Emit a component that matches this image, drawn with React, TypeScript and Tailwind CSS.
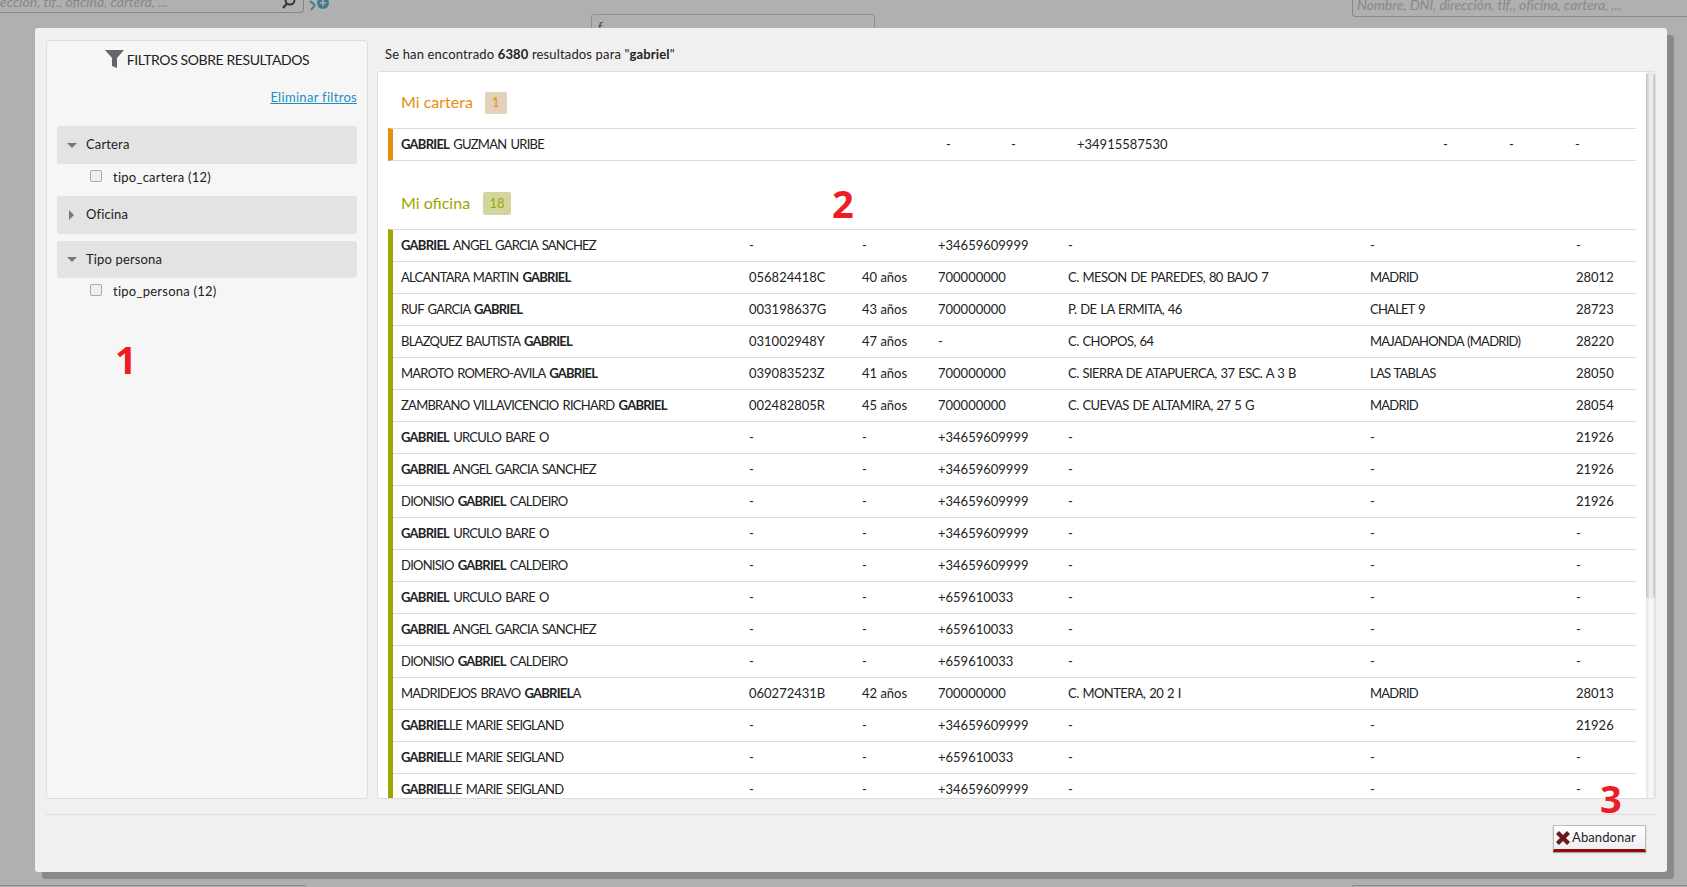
type Row = { name: [string, string, string]; dni: string; age: string; tel: string; addr: string; city: string; cp: string };

const mk = (a: string, b: string, c: string, tel: string, cp = "-", dni = "-", age = "-", addr = "-", city = "-"): Row => ({
  name: [a, b, c], dni, age, tel, addr, city, cp,
});

const G = "GABRIEL";
const rows: Row[] = [
  mk("", G, " ANGEL GARCIA SANCHEZ", "+34659609999"),
  mk("ALCANTARA MARTIN ", G, "", "700000000", "28012", "056824418C", "40 años", "C. MESON DE PAREDES, 80 BAJO 7", "MADRID"),
  mk("RUF GARCIA ", G, "", "700000000", "28723", "003198637G", "43 años", "P. DE LA ERMITA, 46", "CHALET 9"),
  mk("BLAZQUEZ BAUTISTA ", G, "", "-", "28220", "031002948Y", "47 años", "C. CHOPOS, 64", "MAJADAHONDA (MADRID)"),
  mk("MAROTO ROMERO-AVILA ", G, "", "700000000", "28050", "039083523Z", "41 años", "C. SIERRA DE ATAPUERCA, 37 ESC. A 3 B", "LAS TABLAS"),
  mk("ZAMBRANO VILLAVICENCIO RICHARD ", G, "", "700000000", "28054", "002482805R", "45 años", "C. CUEVAS DE ALTAMIRA, 27 5 G", "MADRID"),
  mk("", G, " URCULO BARE O", "+34659609999", "21926"),
  mk("", G, " ANGEL GARCIA SANCHEZ", "+34659609999", "21926"),
  mk("DIONISIO ", G, " CALDEIRO", "+34659609999", "21926"),
  mk("", G, " URCULO BARE O", "+34659609999"),
  mk("DIONISIO ", G, " CALDEIRO", "+34659609999"),
  mk("", G, " URCULO BARE O", "+659610033"),
  mk("", G, " ANGEL GARCIA SANCHEZ", "+659610033"),
  mk("DIONISIO ", G, " CALDEIRO", "+659610033"),
  mk("MADRIDEJOS BRAVO ", "GABRIEL", "A", "700000000", "28013", "060272431B", "42 años", "C. MONTERA, 20 2 I", "MADRID"),
  mk("", "GABRIEL", "LE MARIE SEIGLAND", "+34659609999", "21926"),
  mk("", "GABRIEL", "LE MARIE SEIGLAND", "+659610033"),
  mk("", "GABRIEL", "LE MARIE SEIGLAND", "+34659609999"),
];

const Caret = ({ open }: { open: boolean }) =>
  open ? (
    <span className="w-0 h-0 border-x-[5px] border-x-transparent border-t-[5px] border-t-[#777]" />
  ) : (
    <span className="w-0 h-0 ml-[2px] border-y-[5px] border-y-transparent border-l-[5px] border-l-[#777]" />
  );

const FilterGroup = ({ title, open, option, tall }: { title: string; open: boolean; option?: string; tall?: boolean }) => (
  <div>
    <div className={`${tall ? "h-[38px]" : "h-[37px]"} bg-[#e3e3e3] rounded-[3px] flex items-center pl-[10px]`}>
      <span className="w-[19px] flex items-center"><Caret open={open} /></span>
      <span className="tracking-[0.15px]">{title}</span>
    </div>
    {option && (
      <div className="h-[32px] pb-[4px] flex items-center pl-[33px]">
        <span className="w-[12px] h-[12px] -mt-[5px] mr-[11px] border border-[#aaa] rounded-[2px] bg-[#f0f0f0]" />
        <span className="tracking-[0.25px]">{option}</span>
      </div>
    )}
  </div>
);

const App = () => {
  return (
    <div className="relative w-[1687px] h-[887px] overflow-hidden bg-[#b0b0b0] font-['Lato',sans-serif] text-[13px] text-[#222]">
      {/* page behind the overlay */}
      <div className="flex items-start h-[24px]">
        <div className="w-[304px] h-[14px] -mt-[1px] border-b border-r border-[#888] rounded-br-[4px] flex items-center justify-between pr-[6px] overflow-hidden">
          <span className="italic text-[14px] text-[#888] -mt-[8px] whitespace-nowrap">ección, tlf., oficina, cartera, ...</span>
          <svg width="16" height="14" viewBox="0 0 16 14" className="-mt-[3px]" fill="none" stroke="#333" strokeWidth="2">
            <circle cx="9" cy="3" r="4.5" /><path d="M5.5 7 L2 11" />
          </svg>
        </div>
        <svg width="22" height="12" viewBox="0 0 22 12" className="ml-[5px]">
          <path d="M1 1 L6 5 M6 5 L2 10" stroke="#3d7f8c" strokeWidth="2" fill="none" />
          <circle cx="14" cy="3" r="6" fill="#3d7f8c" />
          <path d="M14 0 V6 M11 3 H17" stroke="#b0b0b0" strokeWidth="1.5" />
        </svg>
        <div className="ml-[260px] mt-[14px] w-[284px] h-[20px] border border-[#909090] rounded-t-[3px] pl-[6px] leading-[24px] italic text-[#444]">ƒ</div>
        <div className="ml-auto w-[335px] h-[17px] border-l border-b border-[#888] rounded-bl-[4px] pl-[4px] overflow-hidden">
          <span className="italic text-[14px] text-[#888] block -mt-[6px] tracking-[-0.05px] whitespace-nowrap">Nombre, DNI, dirección, tlf., oficina, cartera, ...</span>
        </div>
      </div>

      {/* modal */}
      <div className="absolute left-[35px] top-[28px] w-[1632px] h-[844px] bg-[#f0f0f0] rounded-[3px] shadow-[7px_7px_1px_rgba(0,0,0,0.22)] px-[11px] pt-[12px] flex flex-col">
        <div className="flex gap-[9px] h-[759px]">
          {/* filtros */}
          <div className="w-[322px] bg-[#f6f6f6] border border-[#dedede] rounded-[3px] px-[10px]">
            <div className="h-[36px] flex items-center justify-center gap-[3px] text-[14px] tracking-[-0.4px]">
              <svg width="19" height="18" viewBox="0 0 19 18" fill="#666"><path d="M0 0 H19 L12 8 V18 L7 16 V8 Z" /></svg>
              <span>FILTROS SOBRE RESULTADOS</span>
            </div>
            <div className="text-right mt-[11px] h-[18px] mb-[20px] tracking-[0.3px]">
              <a className="text-[#1b8fc1] underline">Eliminar filtros</a>
            </div>
            <div className="flex flex-col">
              <FilterGroup title="Cartera" open tall option="tipo_cartera (12)" />
              <FilterGroup title="Oficina" open={false} tall />
              <div className="h-[7px]" />
              <FilterGroup title="Tipo persona" open option="tipo_persona (12)" />
            </div>
          </div>

          {/* resultados */}
          <div className="flex-1 flex flex-col">
            <div className="h-[31px] flex items-start pt-[5px] pl-[8px] tracking-[0.15px]">
              <span>Se han encontrado <b>6380</b> resultados para "<b>gabriel</b>"</span>
            </div>
            <div className="relative flex-1 bg-white border border-[#dedede] rounded-[3px] pl-[10px] pr-[19px] overflow-hidden">
              <div className="h-[56px] flex items-center pl-[13px] gap-[12px] text-[#e78d0e] pt-[3px]">
                <span className="text-[16px]">Mi cartera</span>
                <span className="w-[22px] h-[22px] mt-[2px] bg-[#e2d2bc] rounded-[2px] flex items-center justify-center text-[13px]">1</span>
              </div>
              <div className="h-[33px] border-y border-[#ddd] border-l-[5px] border-l-[#e78d0e] pl-[8px] pt-[1px] grid grid-cols-[545px_65px_66px_366px_66px_66px_1fr] items-center">
                <span className="tracking-[-0.75px] [word-spacing:1.5px]"><b>GABRIEL</b> GUZMAN URIBE</span>
                <span>-</span>
                <span>-</span>
                <span>+34915587530</span>
                <span>-</span>
                <span>-</span>
                <span>-</span>
              </div>
              <div className="h-[68px] flex items-center pl-[13px] gap-[13px] text-[#9ca600] pt-[15px]">
                <span className="text-[16px]">Mi oficina</span>
                <span className="w-[28px] h-[23px] mt-[2px] bg-[#d3d69c] rounded-[2px] flex items-center justify-center text-[13px]">18</span>
              </div>
              <div className="border-l-[5px] border-l-[#9ca600] border-t border-t-[#ddd]">
                {rows.map((r, i) => (
                  <div key={i} className="h-[32px] border-b border-[#ddd] pl-[8px] grid grid-cols-[348px_113px_76px_130px_302px_206px_1fr] items-center whitespace-nowrap">
                    <span className="tracking-[-0.75px] [word-spacing:1.5px]">{r.name[0]}<b>{r.name[1]}</b>{r.name[2]}</span>
                    <span>{r.dni}</span>
                    <span>{r.age}</span>
                    <span>{r.tel}</span>
                    <span className="tracking-[-0.55px] [word-spacing:1px]">{r.addr}</span>
                    <span className="tracking-[-0.75px] [word-spacing:1px]">{r.city}</span>
                    <span>{r.cp}</span>
                  </div>
                ))}
              </div>
              {/* scrollbar */}
              <div className="absolute right-0 top-0 bottom-0 w-[9px] bg-[linear-gradient(90deg,#e4e4e4,#f8f8f8_40%,#f8f8f8_70%,#e4e4e4)] rounded-t-[4px]">
                <div className="h-[527px] rounded-[5px] bg-[linear-gradient(90deg,#bdbdbd,#ececec_40%,#ececec_70%,#bdbdbd)]" />
              </div>
            </div>
          </div>
        </div>

        {/* pie */}
        <div className="mt-[15px] border-t border-[#dcdcdc] flex justify-end pt-[10px] pr-[10px]">
          <button className="w-[93px] h-[27px] bg-[linear-gradient(#ffffff,#efefef)] border border-[#bbb] border-b-[3px] border-b-[#8f0a0a] shadow-[0_1px_1px_rgba(0,0,0,0.3)] flex items-center pl-[2px] gap-[2px] text-[#223]">
            <svg width="14" height="14" viewBox="0 0 14 14" fill="#6a1a1a"><path d="M3 0 L7 4 L11 0 L14 3 L10 7 L14 11 L11 14 L7 10 L3 14 L0 11 L4 7 L0 3 Z" /></svg>
            <span className="tracking-[0.1px]">Abandonar</span>
          </button>
        </div>
      </div>

      {/* anotaciones */}
      <span className="absolute left-[115px] top-[340px] text-[38px] leading-none font-bold text-[#ee1c25] font-['Open_Sans',sans-serif]">1</span>
      <span className="absolute left-[832px] top-[184px] text-[38px] leading-none font-bold text-[#ee1c25] font-['Open_Sans',sans-serif]">2</span>
      <span className="absolute left-[1600px] top-[779px] text-[38px] leading-none font-bold text-[#ee1c25] font-['Open_Sans',sans-serif]">3</span>

      {/* inputs at page bottom */}
      <div className="absolute bottom-0 left-0 w-[306px] h-[2px] border-t border-r border-[#888] rounded-tr-[3px]" />
      <div className="absolute bottom-0 right-0 w-[335px] h-[2px] border-t border-l border-[#888] rounded-tl-[3px]" />
    </div>
  );
};

export default App;
